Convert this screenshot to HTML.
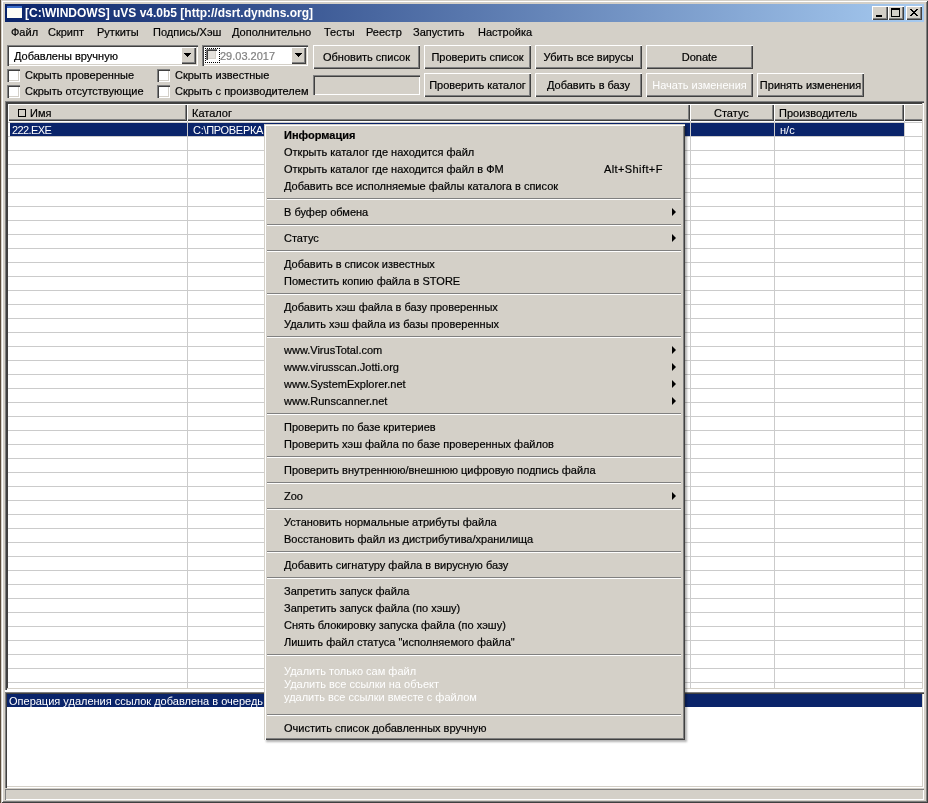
<!DOCTYPE html>
<html><head><meta charset="utf-8">
<style>
*{margin:0;padding:0;box-sizing:border-box}
html,body{width:928px;height:803px;overflow:hidden;background:#5b4c3c}
body{position:relative;-webkit-font-smoothing:antialiased;font-family:"Liberation Sans",sans-serif;font-size:11px;color:#000}
.a{position:absolute}
.t{position:absolute;white-space:nowrap;line-height:15px;font-size:11px}
.win{left:1px;top:0;width:927px;height:803px;background:#d4d0c8;
 box-shadow:inset 1px 1px #d4d0c8,inset -1px -1px #404040,inset 2px 2px #fff,inset -2px -2px #808080}
.title{left:5px;top:4px;width:919px;height:18px;background:linear-gradient(to right,#0a246a,#a6caf0)}
.raised{background:#d4d0c8;box-shadow:inset 1px 1px #fff,inset -1px -1px #404040,inset -2px -2px #808080}
.raised2{background:#d4d0c8;box-shadow:inset 1px 1px #d4d0c8,inset 2px 2px #fff,inset -1px -1px #404040,inset -2px -2px #808080}
.sunken{background:#fff;box-shadow:inset 1px 1px #808080,inset 2px 2px #404040,inset -1px -1px #fff,inset -2px -2px #d4d0c8}
.btn{background:#d4d0c8;box-shadow:inset 1px 1px #fff,inset -1px -1px #404040,inset -2px -2px #808080;text-align:center;line-height:13px}
.tri{width:0;height:0;border-left:3.5px solid transparent;border-right:3.5px solid transparent;border-top:4px solid #000}
.mi{position:absolute;left:284px;white-space:nowrap;line-height:17px;height:17px}
.sep{position:absolute;left:267px;width:414px;height:2px;border-top:1px solid #808080;border-bottom:1px solid #fff}
.arr{position:absolute;left:672px;width:0;height:0;border-top:4px solid transparent;border-bottom:4px solid transparent;border-left:4px solid #000}
.t,.mi,.btn{will-change:transform;-webkit-text-stroke:0.2px currentColor}
.nost{-webkit-text-stroke:0}
</style></head><body>
<div class="a win"></div>
<div class="a title"></div>
<!-- icon -->
<div class="a" style="left:7px;top:6px;width:15px;height:12px;background:#fdfdf6"></div>
<div class="a" style="left:7px;top:6px;width:15px;height:2px;background:#3a6cc8"></div>
<div class="t nost" style="left:25px;top:6px;font-weight:bold;font-size:12px;line-height:14px;color:#fff">[C:\WINDOWS] uVS v4.0b5 [http://dsrt.dyndns.org]</div>
<!-- caption buttons -->
<div class="a raised" style="left:872px;top:6px;width:16px;height:14px"></div>
<div class="a" style="left:876px;top:15px;width:6px;height:2px;background:#000"></div>
<div class="a raised" style="left:888px;top:6px;width:16px;height:14px"></div>
<div class="a" style="left:891px;top:8px;width:9px;height:9px;border:1px solid #000;border-top-width:2px"></div>
<div class="a raised" style="left:906px;top:6px;width:16px;height:14px"></div>
<svg class="a" style="left:910px;top:9px" width="8" height="7"><path d="M0 0h1v1h-1zM1 0h1v1h-1zM6 0h1v1h-1zM7 0h1v1h-1zM1 1h1v1h-1zM2 1h1v1h-1zM5 1h1v1h-1zM6 1h1v1h-1zM2 2h1v1h-1zM3 2h1v1h-1zM4 2h1v1h-1zM5 2h1v1h-1zM3 3h1v1h-1zM4 3h1v1h-1zM2 4h1v1h-1zM3 4h1v1h-1zM4 4h1v1h-1zM5 4h1v1h-1zM1 5h1v1h-1zM2 5h1v1h-1zM5 5h1v1h-1zM6 5h1v1h-1zM0 6h1v1h-1zM1 6h1v1h-1zM6 6h1v1h-1zM7 6h1v1h-1z" fill="#000"/></svg>

<!-- menu bar -->
<div class="t" style="left:11px;top:25px">Файл</div>
<div class="t" style="left:48px;top:25px">Скрипт</div>
<div class="t" style="left:97px;top:25px">Руткиты</div>
<div class="t" style="left:153px;top:25px">Подпись/Хэш</div>
<div class="t" style="left:232px;top:25px">Дополнительно</div>
<div class="t" style="left:324px;top:25px">Тесты</div>
<div class="t" style="left:366px;top:25px">Реестр</div>
<div class="t" style="left:413px;top:25px">Запустить</div>
<div class="t" style="left:478px;top:25px">Настройка</div>

<!-- combo -->
<div class="a sunken" style="left:7px;top:45px;width:191px;height:21px"></div>
<div class="t" style="left:14px;top:49px">Добавлены вручную</div>
<div class="a raised" style="left:181px;top:47px;width:15px;height:17px"></div>
<svg class="a" style="left:184px;top:53px" width="7" height="4"><path d="M0 0h7v1h-1v1h-1v1h-1v1h-1v-1h-1v-1h-1v-1h-1z" fill="#000"/></svg>
<!-- date -->
<div class="a sunken" style="left:202px;top:45px;width:106px;height:21px"></div>
<div class="a" style="left:205px;top:48px;width:15px;height:15px;border:1px dotted #000"></div>
<div class="a sunken" style="left:206px;top:49px;width:11px;height:11px;background:#e4e1dc"></div>
<div class="t" style="left:220px;top:49px;color:#808080">29.03.2017</div>
<div class="a raised" style="left:291px;top:47px;width:15px;height:17px"></div>
<svg class="a" style="left:295px;top:53px" width="7" height="4"><path d="M0 0h7v1h-1v1h-1v1h-1v1h-1v-1h-1v-1h-1v-1h-1z" fill="#000"/></svg>

<!-- checkboxes -->
<div class="a sunken" style="left:7px;top:69px;width:13px;height:13px"></div>
<div class="t" style="left:25px;top:68px">Скрыть проверенные</div>
<div class="a sunken" style="left:7px;top:85px;width:13px;height:13px"></div>
<div class="t" style="left:25px;top:84px">Скрыть отсутствующие</div>
<div class="a sunken" style="left:157px;top:69px;width:13px;height:13px"></div>
<div class="t" style="left:175px;top:68px">Скрыть известные</div>
<div class="a sunken" style="left:157px;top:85px;width:13px;height:13px"></div>
<div class="t" style="left:175px;top:84px">Скрыть с производителем</div>
<div class="a sunken" style="left:313px;top:75px;width:107px;height:20px;background:#d4d0c8"></div>

<!-- buttons -->
<div class="a btn" style="left:313px;top:45px;width:107px;height:24px;padding-top:6px">Обновить список</div>
<div class="a btn" style="left:424px;top:45px;width:107px;height:24px;padding-top:6px">Проверить список</div>
<div class="a btn" style="left:535px;top:45px;width:107px;height:24px;padding-top:6px">Убить все вирусы</div>
<div class="a btn" style="left:646px;top:45px;width:107px;height:24px;padding-top:6px">Donate</div>
<div class="a btn" style="left:424px;top:73px;width:107px;height:24px;padding-top:6px">Проверить каталог</div>
<div class="a btn" style="left:535px;top:73px;width:107px;height:24px;padding-top:6px">Добавить в базу</div>
<div class="a btn nost" style="left:646px;top:73px;width:107px;height:24px;padding-top:6px;color:#fff">Начать изменения</div>
<div class="a btn" style="left:757px;top:73px;width:107px;height:24px;padding-top:6px">Принять изменения</div>

<!-- listview -->
<div id="lv" class="a sunken" style="left:5px;top:101px;width:919px;height:589px"></div>
<div class="a" style="left:7px;top:122px;width:915px;height:566px;background:repeating-linear-gradient(to bottom,#cbcbcb 0,#cbcbcb 1px,transparent 1px,transparent 14px)"></div>
<div class="a" style="left:187px;top:121px;width:1px;height:567px;background:#cbcbcb"></div>
<div class="a" style="left:690px;top:121px;width:1px;height:567px;background:#cbcbcb"></div>
<div class="a" style="left:774px;top:121px;width:1px;height:567px;background:#cbcbcb"></div>
<div class="a" style="left:904px;top:121px;width:1px;height:567px;background:#cbcbcb"></div>
<div class="a" style="left:7px;top:103px;width:915px;height:1px;background:#404040"></div>
<div class="a" style="left:7px;top:103px;width:1px;height:585px;background:#404040"></div>
<div class="a raised" style="left:8px;top:104px;width:179px;height:17px"></div>
<div class="a raised" style="left:187px;top:104px;width:503px;height:17px"></div>
<div class="a raised" style="left:690px;top:104px;width:84px;height:17px"></div>
<div class="a raised" style="left:774px;top:104px;width:130px;height:17px"></div>
<div class="a" style="left:904px;top:104px;width:18px;height:17px;background:#d4d0c8;box-shadow:inset 1px 1px #fff,inset 0 -1px #404040,inset 0 -2px #808080"></div>
<div class="a" style="left:18px;top:109px;width:8px;height:8px;border:1px solid #000"></div>
<div class="t" style="left:30px;top:106px">Имя</div>
<div class="t" style="left:192px;top:106px">Каталог</div>
<div class="t" style="left:714px;top:106px">Статус</div>
<div class="t" style="left:779px;top:106px">Производитель</div>
<div class="a" style="left:10px;top:123px;width:177px;height:13px;background:#0a246a"></div>
<div class="a" style="left:188px;top:123px;width:502px;height:13px;background:#0a246a"></div>
<div class="a" style="left:691px;top:123px;width:83px;height:13px;background:#0a246a"></div>
<div class="a" style="left:775px;top:123px;width:129px;height:13px;background:#0a246a"></div>
<div class="t nost" style="left:12px;top:123px;color:#fff;letter-spacing:-0.6px">222.EXE</div>
<div class="t nost" style="left:193px;top:123px;color:#fff;letter-spacing:-0.3px">C:\ПРОВЕРКА</div>
<div class="t nost" style="left:780px;top:123px;color:#fff">н/с</div>

<!-- log -->
<div class="a" style="left:5px;top:690px;width:919px;height:2px;background:#fff"></div>
<div class="a sunken" style="left:5px;top:692px;width:919px;height:96px"></div>
<div class="a" style="left:7px;top:694px;width:915px;height:13px;background:#0a246a"></div>
<div class="t nost" style="left:9px;top:694px;color:#fff">Операция удаления ссылок добавлена в очередь</div>
<!-- status -->
<div class="a" style="left:5px;top:789px;width:919px;height:11px;box-shadow:inset 1px 1px #808080,inset -1px -1px #fff"></div>

<!-- context menu -->
<div class="a" style="left:264px;top:124px;width:421px;height:616px;background:#d4d0c8;box-shadow:inset 1px 1px #d4d0c8,inset 2px 2px #fff,inset -1px -1px #404040,inset -2px -2px #808080,2px 2px 2px rgba(0,0,0,.3)"></div>
<div class="mi" style="top:127px;font-weight:bold;">Информация</div>
<div class="mi" style="top:144px;">Открыть каталог где находится файл</div>
<div class="mi" style="top:161px;">Открыть каталог где находится файл в ФМ</div>
<div class="mi" style="top:161px;left:auto;right:265px;letter-spacing:0.4px">Alt+Shift+F</div>
<div class="mi" style="top:178px;">Добавить все исполняемые файлы каталога в список</div>
<div class="sep" style="top:198px"></div>
<div class="mi" style="top:204px;">В буфер обмена</div>
<div class="arr" style="top:208px"></div>
<div class="sep" style="top:224px"></div>
<div class="mi" style="top:230px;">Статус</div>
<div class="arr" style="top:234px"></div>
<div class="sep" style="top:250px"></div>
<div class="mi" style="top:256px;">Добавить в список известных</div>
<div class="mi" style="top:273px;">Поместить копию файла в STORE</div>
<div class="sep" style="top:293px"></div>
<div class="mi" style="top:299px;">Добавить хэш файла в базу проверенных</div>
<div class="mi" style="top:316px;">Удалить хэш файла из базы проверенных</div>
<div class="sep" style="top:336px"></div>
<div class="mi" style="top:342px;">www.VirusTotal.com</div>
<div class="arr" style="top:346px"></div>
<div class="mi" style="top:359px;">www.virusscan.Jotti.org</div>
<div class="arr" style="top:363px"></div>
<div class="mi" style="top:376px;">www.SystemExplorer.net</div>
<div class="arr" style="top:380px"></div>
<div class="mi" style="top:393px;">www.Runscanner.net</div>
<div class="arr" style="top:397px"></div>
<div class="sep" style="top:413px"></div>
<div class="mi" style="top:419px;">Проверить по базе критериев</div>
<div class="mi" style="top:436px;">Проверить хэш файла по базе проверенных файлов</div>
<div class="sep" style="top:456px"></div>
<div class="mi" style="top:462px;">Проверить внутреннюю/внешнюю цифровую подпись файла</div>
<div class="sep" style="top:482px"></div>
<div class="mi" style="top:488px;">Zoo</div>
<div class="arr" style="top:492px"></div>
<div class="sep" style="top:508px"></div>
<div class="mi" style="top:514px;">Установить нормальные атрибуты файла</div>
<div class="mi" style="top:531px;">Восстановить файл из дистрибутива/хранилища</div>
<div class="sep" style="top:551px"></div>
<div class="mi" style="top:557px;">Добавить сигнатуру файла в вирусную базу</div>
<div class="sep" style="top:577px"></div>
<div class="mi" style="top:583px;">Запретить запуск файла</div>
<div class="mi" style="top:600px;">Запретить запуск файла (по хэшу)</div>
<div class="mi" style="top:617px;">Снять блокировку запуска файла (по хэшу)</div>
<div class="mi" style="top:634px;">Лишить файл статуса "исполняемого файла"</div>
<div class="sep" style="top:654px"></div>
<div class="t nost" style="left:284px;top:664px;color:#fff">Удалить только сам файл</div>
<div class="t nost" style="left:284px;top:677px;color:#fff">Удалить все ссылки на объект</div>
<div class="t nost" style="left:284px;top:690px;color:#fff">удалить все ссылки вместе с файлом</div>
<div class="sep" style="top:714px"></div>
<div class="mi" style="top:720px;">Очистить список добавленных вручную</div>
</body></html>
